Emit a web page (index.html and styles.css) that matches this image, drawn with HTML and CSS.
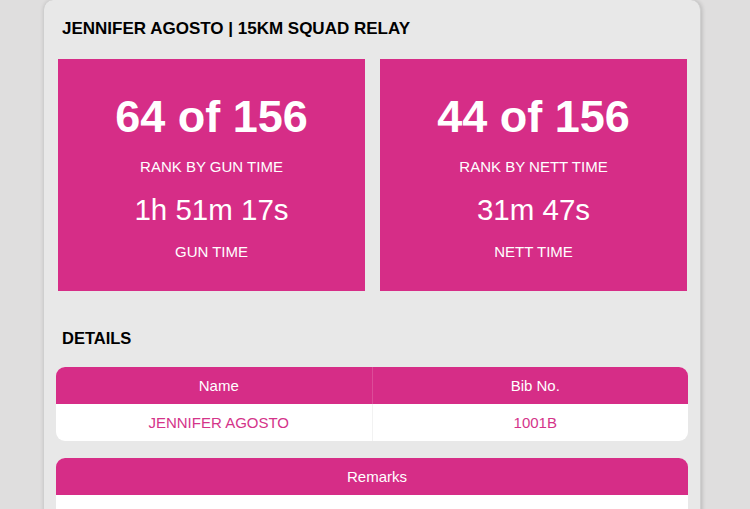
FILE: index.html
```html
<!DOCTYPE html>
<html lang="en">
<head>
    <meta charset="UTF-8">
    <meta name="viewport" content="width=device-width, initial-scale=1.0">
    <title>Race Result</title>
    <link rel="stylesheet" href="styles.css">
</head>
<body>
    <div class="card">
        <h1 class="title">JENNIFER AGOSTO | 15KM SQUAD RELAY</h1>

        <div class="stats">
            <div class="stat">
                <div class="rank">64 of 156</div>
                <div class="label">RANK BY GUN TIME</div>
                <div class="time">1h 51m 17s</div>
                <div class="label">GUN TIME</div>
            </div>
            <div class="stat">
                <div class="rank">44 of 156</div>
                <div class="label">RANK BY NETT TIME</div>
                <div class="time">31m 47s</div>
                <div class="label">NETT TIME</div>
            </div>
        </div>

        <h2 class="section">DETAILS</h2>

        <div class="table-wrap">
            <table>
                <thead>
                    <tr><th>Name</th><th>Bib No.</th></tr>
                </thead>
                <tbody>
                    <tr><td>JENNIFER AGOSTO</td><td>1001B</td></tr>
                </tbody>
            </table>
        </div>

        <div class="table-wrap">
            <table>
                <thead>
                    <tr><th>Remarks</th></tr>
                </thead>
                <tbody>
                    <tr><td>&nbsp;</td></tr>
                </tbody>
            </table>
        </div>
    </div>
</body>
</html>
```

FILE: styles.css
```css
:root {
    --pink: #d62d87;
    --card: #e8e8e8;
    --page: #dfdede;
}
body {
    font-family: 'Liberation Sans', Arial, Helvetica, sans-serif;
    margin: 0;
    padding: 0;
    background: var(--page);
    color: #000;
}
.card {
    width: 632px;
    margin-left: 43px;
    padding: 19px 12px 20px;
    background: var(--card);
    border: 1px solid #cfcfcf;
    border-top: none;
    border-radius: 10px;
    box-shadow: 1px 0 4px rgba(0,0,0,0.18);
}
.title {
    margin: 0 0 0 6px;
    font-size: 17px;
    line-height: 20px;
    font-weight: bold;
}
.stats {
    display: grid;
    grid-template-columns: 1fr 1fr;
    gap: 15px;
    margin: 20px 1px 0 2px;
}
.stat {
    background: var(--pink);
    color: #fff;
    text-align: center;
    padding: 32px 0 29px;
}
.rank {
    font-size: 45px;
    font-weight: bold;
    line-height: 52px;
}
.label {
    font-size: 15px;
    line-height: 20px;
    margin-top: 14px;
}
.time {
    font-size: 29.5px;
    line-height: 36px;
    margin: 15px 0 1px;
}
.section {
    margin: 37px 0 0 6px;
    font-size: 16.5px;
    line-height: 20px;
    font-weight: bold;
}
.table-wrap {
    margin-top: 19px;
    border-radius: 9px;
    overflow: hidden;
    background: #fff;
}
.table-wrap + .table-wrap {
    margin-top: 17px;
}
table {
    width: 100%;
    border-collapse: collapse;
    table-layout: fixed;
}
th, td {
    font-size: 15px;
    font-weight: normal;
    text-align: center;
    height: 37px;
    padding: 0 0 0 10px;
}
th {
    background: var(--pink);
    color: #fff;
    border-right: 1px solid rgba(255,255,255,0.15);
}
td {
    color: #d4348a;
    border-right: 1px solid #f2f2f2;
}
th:last-child, td:last-child {
    border-right: none;
}
```
